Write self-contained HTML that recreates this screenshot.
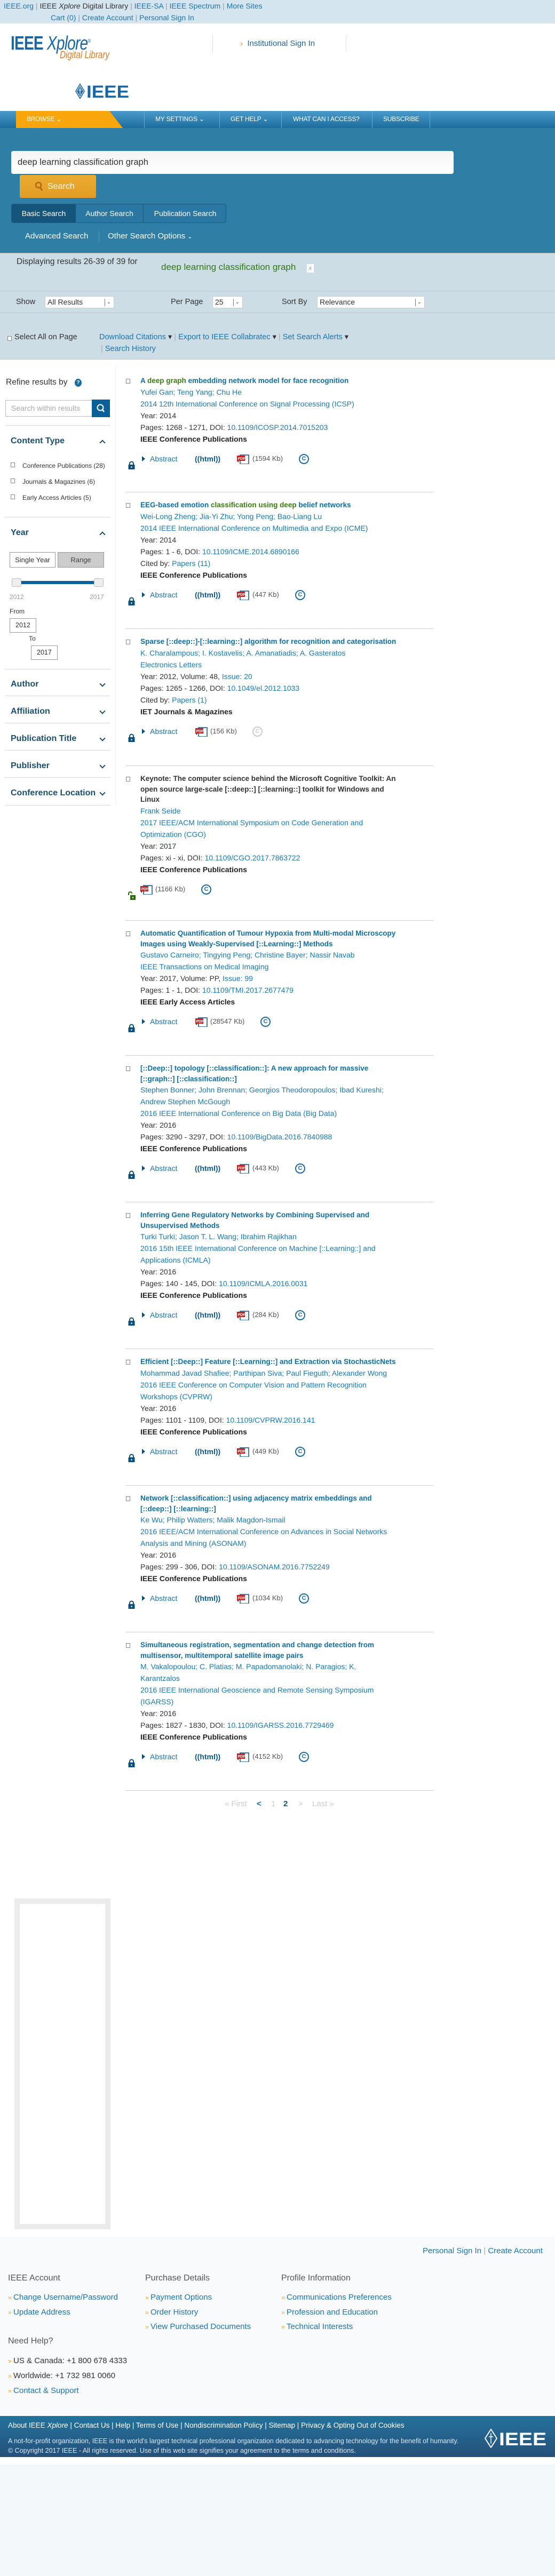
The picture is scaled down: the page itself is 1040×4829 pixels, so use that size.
<!DOCTYPE html>
<html><head><meta charset="utf-8">
<style>
*{margin:0;padding:0;box-sizing:border-box}
body{width:1040px;height:4829px;position:relative;overflow:hidden;background:#fff;font-family:"Liberation Sans",sans-serif;color:#333}
.a{position:absolute;white-space:nowrap}
a{text-decoration:none;color:#1a74ad}
.top{left:0;top:0;width:1040px;height:44px;background:#d5e5ef;font-size:14px}
.nav{left:0;top:208px;width:1040px;height:32px;background:linear-gradient(#4a9bcb,#1c6d9e);box-shadow:0 2px 3px rgba(0,0,0,.3)}
.nav span{position:absolute;top:8px;color:#fff;font-size:12px;letter-spacing:-.2px}
.nav i{position:absolute;top:0;width:1px;height:32px;background:#6aa8cf}
.srch{left:0;top:240px;width:1040px;height:234px;background:#2f7ea6}
.bar{left:0;width:1040px;background:#cddde6}
.sel{background:#fff;border:1px solid #c5ccd0;border-radius:2px;height:23px;font-size:14px;line-height:21px;padding-left:4px;color:#333}
.sel b{position:absolute;right:16px;top:4px;width:1px;height:14px;background:#777}
.sel em{position:absolute;right:5px;top:0;font-style:normal;font-size:10px;color:#555}
.cb{position:absolute;width:8px;height:9px;border:1px solid #888;background:#fff}
.sh{font-size:16px;font-weight:bold;color:#1b4f72}
.shl{position:absolute;left:10px;width:196px;height:1px;background:#d6d6d6}
.chev{position:absolute;left:188px;width:8px;height:8px;border-right:2px solid #1b4f72;border-bottom:2px solid #1b4f72}
.r{position:absolute;left:263px;white-space:nowrap}
.t{font-weight:bold;font-size:13.5px;line-height:19.5px;color:#0f6ea3}
.t g{color:#3b7d12}
.m{font-size:14px;line-height:22px;color:#333}
.m a{color:#1a7ab5}
.m b{color:#222}
.act{margin-top:16px;height:20px;position:relative;font-size:14px;line-height:20px}
.act .ab{position:absolute;left:0;color:#1a74ad}
.act .ab:before{content:"";display:inline-block;border-left:6px solid #0d4f7a;border-top:5px solid transparent;border-bottom:5px solid transparent;margin:0 9px 0 3px}
.act .h{position:absolute;color:#0d5a8e;font-weight:bold;font-size:14px}
.pdf{position:absolute;top:2px;width:24px;height:18px}
.kb{position:absolute;color:#555;font-size:13px}
.cp{position:absolute;top:1px;width:19px;height:19px;border:2.5px solid #1a6aa6;border-radius:50%;color:#1a6aa6;font-weight:bold;font-size:11px;line-height:14px;text-align:center}
.cp.g{border-color:#ccc;color:#ccc}
.lk{position:absolute;left:-23px;top:14px}
.sep{position:absolute;left:235px;width:577px;height:1px;background:#cfcfcf}
.rb{position:absolute;left:236px;width:8px;height:9px;border:1px solid #888}
.fl{font-size:15px;color:#1a74ad}
.fl:before{content:"» ";color:#f0a830;font-size:12px}
.fh{font-size:16px;color:#555}
</style></head><body>

<!-- top bar -->
<div class="a top">
 <div class="a" style="left:7px;top:3px"><a>IEEE.org</a> <span style="color:#999">|</span> <span style="color:#333">IEEE <i>Xplore</i> Digital Library</span> <span style="color:#999">|</span> <a>IEEE-SA</a> <span style="color:#999">|</span> <a>IEEE Spectrum</a> <span style="color:#999">|</span> <a>More Sites</a></div>
 <div class="a" style="left:95px;top:25px"><a>Cart (0)</a> <span style="color:#999">|</span> <a>Create Account</a> <span style="color:#999">|</span> <a>Personal Sign In</a></div>
</div>

<!-- logo -->
<div class="a" style="left:20px;top:60px;font-size:36px;color:#1a66a3;transform:scaleX(.78);transform-origin:left top;letter-spacing:-1px"><b style="font-weight:bold">IEEE</b> <i>Xplore</i><sup style="font-size:10px">®</sup></div>
<div class="a" style="left:112px;top:93px;font-size:19px;color:#e57a1e;font-style:italic;transform:scaleX(.8);transform-origin:left top">Digital Library</div>
<div class="a" style="left:398px;top:65px;width:1px;height:33px;background:#ddd"></div>
<div class="a" style="left:648px;top:65px;width:1px;height:33px;background:#ddd"></div>
<div class="a" style="left:450px;top:73px;font-size:15px;color:#1a66a3"><span style="color:#e88a1e">›</span>&nbsp; Institutional Sign In</div>
<svg class="a" style="left:140px;top:155px" width="104" height="32" viewBox="0 0 104 32">
 <path d="M10 1 L19 16 L10 31 L1 16Z" fill="#1a66a3"/><path d="M10 5 L16.5 16 L10 27 L3.5 16Z" fill="none" stroke="#fff" stroke-width="1"/><path d="M10 9v14M7 14h6" stroke="#fff" stroke-width="1.2"/>
 <text x="22" y="28" font-family="Liberation Sans" font-weight="bold" font-size="32" fill="#1a66a3" textLength="80" lengthAdjust="spacingAndGlyphs">IEEE</text>
</svg>

<!-- nav -->
<div class="a nav">
 <div class="a" style="left:30px;top:0;width:200px;height:32px;background:#f9a60d;clip-path:polygon(0 0,175px 0,200px 32px,0 32px)"></div>
 <span style="left:50px">BROWSE &#8964;</span>
 <i style="left:270px"></i><span style="left:291px">MY SETTINGS &#8964;</span>
 <i style="left:411px"></i><span style="left:432px">GET HELP &#8964;</span>
 <i style="left:527px"></i><span style="left:549px">WHAT CAN I ACCESS?</span>
 <i style="left:697px"></i><span style="left:718px">SUBSCRIBE</span>
 <i style="left:805px"></i>
</div>

<!-- search -->
<div class="a srch"></div>
<div class="a" style="left:21px;top:283px;width:829px;height:43px;background:linear-gradient(#f4f4f4,#fff);border-radius:4px;font-size:16.5px;line-height:43px;padding-left:12px;color:#333">deep learning classification graph</div>
<div class="a" style="left:37px;top:328px;width:143px;height:43px;background:linear-gradient(#eaad31,#e39b25);border-radius:3px;color:#fff;font-size:16px;line-height:43px;padding-left:30px">
 <svg class="a" style="left:28px;top:12px" width="16" height="20" viewBox="0 0 16 20"><circle cx="7" cy="7" r="5" fill="none" stroke="#b06a10" stroke-width="2.5"/><path d="M10 11l4 6" stroke="#b06a10" stroke-width="3"/></svg>
 <span style="margin-left:22px">Search</span></div>
<div class="a" style="left:21px;top:382px;width:403px;height:36px;border:1px solid #1d5a80;border-radius:4px;background:#2a77a3;overflow:hidden;font-size:14px;line-height:34px;color:#fff">
 <div class="a" style="left:0;top:0;width:120px;height:34px;background:#15557c;text-align:center">Basic Search</div>
 <div class="a" style="left:120px;top:0;width:127px;height:34px;text-align:center;border-right:1px solid #1d5a80">Author Search</div>
 <div class="a" style="left:247px;top:0;width:156px;height:34px;text-align:center">Publication Search</div>
</div>
<div class="a" style="left:47px;top:434px;font-size:15px;color:#fff">Advanced Search</div>
<div class="a" style="left:185px;top:433px;width:1px;height:22px;background:#5b9ac0"></div>
<div class="a" style="left:202px;top:434px;font-size:15px;color:#fff">Other Search Options <span style="font-size:11px">&#8964;</span></div>

<!-- results bar -->
<div class="a bar" style="top:474px;height:71px;border-top:1px solid #bbb"></div>
<div class="a" style="left:31px;top:482px;font-size:15.5px;color:#333">Displaying results 26-39 of 39 for</div>
<div class="a" style="left:302px;top:491px;font-size:17px;color:#2e7a10">deep learning classification graph</div>
<div class="a" style="left:575px;top:495px;width:13px;height:16px;background:#fff;color:#999;font-size:11px;text-align:center;line-height:16px">x</div>
<div class="a bar" style="top:545px;height:42px;border-top:1px solid #b9c6ce;border-bottom:1px solid #b9c6ce"></div>
<div class="a" style="left:30px;top:558px;font-size:14.5px">Show</div>
<div class="a sel" style="left:84px;top:555px;width:130px">All Results<b></b><em>&#8964;</em></div>
<div class="a" style="left:320px;top:558px;font-size:14.5px">Per Page</div>
<div class="a sel" style="left:398px;top:555px;width:57px">25<b></b><em>&#8964;</em></div>
<div class="a" style="left:528px;top:558px;font-size:14.5px">Sort By</div>
<div class="a sel" style="left:594px;top:555px;width:202px">Relevance<b></b><em>&#8964;</em></div>
<div class="a bar" style="top:587px;height:87px;border-bottom:1px solid #b9c6ce"></div>
<div class="cb" style="left:14px;top:630px"></div>
<div class="a" style="left:27px;top:624px;font-size:14.5px">Select All on Page</div>
<div class="a" style="left:186px;top:624px;font-size:14.5px"><a>Download Citations</a> ▾ <span style="color:#aaa">|</span> <a>Export to IEEE Collabratec</a> ▾ <span style="color:#aaa">|</span> <a>Set Search Alerts</a> ▾</div>
<div class="a" style="left:189px;top:646px;font-size:14.5px"><span style="color:#aaa">|</span> <a>Search History</a></div>

<!-- sidebar -->
<div class="a" style="left:216px;top:686px;width:1px;height:823px;background:#eee"></div>
<div class="a" style="left:11px;top:708px;font-size:15.5px;color:#333">Refine results by</div>
<div class="a" style="left:140px;top:710px;width:13px;height:15px;border-radius:50%;background:#1a6aa6;color:#fff;font-size:10px;text-align:center;line-height:15px;font-weight:bold">?</div>
<div class="a" style="left:10px;top:750px;width:163px;height:31px;border:1px solid #bbb;font-size:14px;line-height:29px;padding-left:10px;color:#aaa;overflow:hidden">Search within results</div>
<div class="a" style="left:172px;top:749px;width:34px;height:33px;background:#0a6199"><svg width="34" height="33" viewBox="0 0 34 33"><circle cx="16" cy="15" r="5.5" fill="none" stroke="#fff" stroke-width="2"/><path d="M20 19l3 4" stroke="#fff" stroke-width="2.5"/></svg></div>
<div class="shl" style="top:797px"></div>
<div class="a sh" style="left:20px;top:818px">Content Type</div>
<div class="chev" style="top:826px;transform:rotate(-135deg)"></div>
<div class="cb" style="left:20px;top:867px"></div><div class="a" style="left:42px;top:866px;font-size:12px">Conference Publications (28)</div>
<div class="cb" style="left:20px;top:897px"></div><div class="a" style="left:42px;top:896px;font-size:12px">Journals &amp; Magazines (6)</div>
<div class="cb" style="left:20px;top:927px"></div><div class="a" style="left:42px;top:926px;font-size:12px">Early Access Articles (5)</div>
<div class="shl" style="top:969px"></div>
<div class="a sh" style="left:20px;top:990px">Year</div>
<div class="chev" style="top:998px;transform:rotate(-135deg)"></div>
<div class="a" style="left:18px;top:1035px;width:86px;height:29px;border:1px solid #999;font-size:13px;line-height:27px;text-align:center">Single Year</div>
<div class="a" style="left:108px;top:1035px;width:87px;height:29px;border:1px solid #999;background:#ccc;font-size:13px;line-height:27px;text-align:center;color:#444">Range</div>
<div class="a" style="left:35px;top:1089px;width:145px;height:6px;background:#0a6199"></div>
<div class="a" style="left:22px;top:1084px;width:18px;height:16px;border:1px solid #bbb;background:#eee;border-radius:3px"></div>
<div class="a" style="left:176px;top:1084px;width:18px;height:16px;border:1px solid #bbb;background:#eee;border-radius:3px"></div>
<div class="a" style="left:18px;top:1112px;font-size:12px;color:#999">2012</div>
<div class="a" style="left:168px;top:1112px;font-size:12px;color:#999">2017</div>
<div class="a" style="left:18px;top:1139px;font-size:12px">From</div>
<div class="a" style="left:18px;top:1159px;width:50px;height:27px;border:1px solid #999;font-size:12.5px;line-height:25px;padding-left:10px;overflow:hidden">2012</div>
<div class="a" style="left:54px;top:1190px;font-size:12px">To</div>
<div class="a" style="left:58px;top:1210px;width:50px;height:27px;border:1px solid #999;font-size:12.5px;line-height:25px;padding-left:10px">2017</div>
<div class="shl" style="top:1254px"></div>
<div class="a sh" style="left:20px;top:1274px">Author</div><div class="chev" style="top:1278px;transform:rotate(45deg)"></div>
<div class="shl" style="top:1304px"></div>
<div class="a sh" style="left:20px;top:1325px">Affiliation</div><div class="chev" style="top:1329px;transform:rotate(45deg)"></div>
<div class="shl" style="top:1355px"></div>
<div class="a sh" style="left:20px;top:1376px">Publication Title</div><div class="chev" style="top:1380px;transform:rotate(45deg)"></div>
<div class="shl" style="top:1406px"></div>
<div class="a sh" style="left:20px;top:1427px">Publisher</div><div class="chev" style="top:1431px;transform:rotate(45deg)"></div>
<div class="shl" style="top:1457px"></div>
<div class="a sh" style="left:20px;top:1478px">Conference Location</div><div class="chev" style="top:1482px;transform:rotate(45deg)"></div>
<div class="shl" style="top:1509px"></div>

<svg width="0" height="0" style="position:absolute">
 <defs>
  <g id="pdf"><rect x="6" y="1" width="16" height="17" fill="#fff" stroke="#1a5a96" stroke-width="1.6"/><rect x="0" y="2" width="15" height="10" fill="#c8201c"/><text x="1.5" y="10" font-family="Liberation Sans" font-size="7" font-weight="bold" fill="#fff">PDF</text><path d="M0 12l3 3v-3z" fill="#8a1410"/></g>
  <g id="lk"><path d="M3 7V5a3.5 3.5 0 0 1 7 0v2" fill="none" stroke="#0b4f7c" stroke-width="2"/><rect x="0.5" y="7" width="12" height="9" fill="#0b4f7c"/><circle cx="6.5" cy="11.5" r="1.3" fill="#fff"/></g>
  <g id="ulk"><path d="M1 7V4a3 3 0 0 1 6 0" fill="none" stroke="#2e6b0e" stroke-width="2"/><rect x="4" y="7" width="10" height="9" fill="#2e6b0e"/><circle cx="9" cy="11.5" r="1.3" fill="#fff"/></g>
 </defs>
</svg>

<!-- R1 -->
<div class="rb" style="top:710px"></div>
<div class="r" style="top:704px">
 <div class="t">A <g>deep graph</g> embedding network model for face recognition</div>
 <div class="m"><a>Yufei Gan; Teng Yang; Chu He</a><br><a>2014 12th International Conference on Signal Processing (ICSP)</a><br>Year: 2014<br>Pages: 1268 - 1271, DOI: <a>10.1109/ICOSP.2014.7015203</a><br><b>IEEE Conference Publications</b></div>
 <div class="act"><span class="ab">Abstract</span><span class="h" style="left:102px">((html))</span><svg class="pdf" style="left:181px"><use href="#pdf"/></svg><span class="kb" style="left:210px">(1594 Kb)</span><span class="cp" style="left:297px">C</span><svg class="lk" width="13" height="17"><use href="#lk"/></svg></div>
</div>
<div class="sep" style="top:922px"></div>

<!-- R2 -->
<div class="rb" style="top:943px"></div>
<div class="r" style="top:937px">
 <div class="t">EEG-based emotion <g>classification using deep</g> belief networks</div>
 <div class="m"><a>Wei-Long Zheng; Jia-Yi Zhu; Yong Peng; Bao-Liang Lu</a><br><a>2014 IEEE International Conference on Multimedia and Expo (ICME)</a><br>Year: 2014<br>Pages: 1 - 6, DOI: <a>10.1109/ICME.2014.6890166</a><br>Cited by: <a>Papers (11)</a><br><b>IEEE Conference Publications</b></div>
 <div class="act"><span class="ab">Abstract</span><span class="h" style="left:102px">((html))</span><svg class="pdf" style="left:181px"><use href="#pdf"/></svg><span class="kb" style="left:210px">(447 Kb)</span><span class="cp" style="left:290px">C</span><svg class="lk" width="13" height="17"><use href="#lk"/></svg></div>
</div>
<div class="sep" style="top:1178px"></div>

<!-- R3 -->
<div class="rb" style="top:1199px"></div>
<div class="r" style="top:1193px">
 <div class="t">Sparse [::deep::]-[::learning::] algorithm for recognition and categorisation</div>
 <div class="m"><a>K. Charalampous; I. Kostavelis; A. Amanatiadis; A. Gasteratos</a><br><a>Electronics Letters</a><br>Year: 2012, Volume: 48, <a>Issue: 20</a><br>Pages: 1265 - 1266, DOI: <a>10.1049/el.2012.1033</a><br>Cited by: <a>Papers (1)</a><br><b>IET Journals &amp; Magazines</b></div>
 <div class="act"><span class="ab">Abstract</span><svg class="pdf" style="left:103px"><use href="#pdf"/></svg><span class="kb" style="left:131px">(156 Kb)</span><span class="cp g" style="left:210px">C</span><svg class="lk" width="13" height="17"><use href="#lk"/></svg></div>
</div>
<div class="sep" style="top:1435px"></div>

<!-- R4 -->
<div class="rb" style="top:1456px"></div>
<div class="r" style="top:1450px">
 <div class="t" style="color:#333">Keynote: The computer science behind the Microsoft Cognitive Toolkit: An<br>open source large-scale [::deep::] [::learning::] toolkit for Windows and<br>Linux</div>
 <div class="m"><a>Frank Seide</a><br><a>2017 IEEE/ACM International Symposium on Code Generation and</a><br><a>Optimization (CGO)</a><br>Year: 2017<br>Pages: xi - xi, DOI: <a>10.1109/CGO.2017.7863722</a><br><b>IEEE Conference Publications</b></div>
 <div class="act"><svg class="pdf" style="left:0"><use href="#pdf"/></svg><span class="kb" style="left:28px">(1166 Kb)</span><span class="cp" style="left:114px">C</span><svg class="lk" width="15" height="17"><use href="#ulk"/></svg></div>
</div>
<div class="sep" style="top:1725px"></div>

<!-- R5 -->
<div class="rb" style="top:1746px"></div>
<div class="r" style="top:1740px">
 <div class="t">Automatic Quantification of Tumour Hypoxia from Multi-modal Microscopy<br>Images using Weakly-Supervised [::Learning::] Methods</div>
 <div class="m"><a>Gustavo Carneiro; Tingying Peng; Christine Bayer; Nassir Navab</a><br><a>IEEE Transactions on Medical Imaging</a><br>Year: 2017, Volume: PP, <a>Issue: 99</a><br>Pages: 1 - 1, DOI: <a>10.1109/TMI.2017.2677479</a><br><b>IEEE Early Access Articles</b></div>
 <div class="act"><span class="ab">Abstract</span><svg class="pdf" style="left:103px"><use href="#pdf"/></svg><span class="kb" style="left:131px">(28547 Kb)</span><span class="cp" style="left:225px">C</span><svg class="lk" width="13" height="17"><use href="#lk"/></svg></div>
</div>
<div class="sep" style="top:1978px"></div>

<!-- R6 -->
<div class="rb" style="top:1999px"></div>
<div class="r" style="top:1993px">
 <div class="t">[::Deep::] topology [::classification::]: A new approach for massive<br>[::graph::] [::classification::]</div>
 <div class="m"><a>Stephen Bonner; John Brennan; Georgios Theodoropoulos; Ibad Kureshi;</a><br><a>Andrew Stephen McGough</a><br><a>2016 IEEE International Conference on Big Data (Big Data)</a><br>Year: 2016<br>Pages: 3290 - 3297, DOI: <a>10.1109/BigData.2016.7840988</a><br><b>IEEE Conference Publications</b></div>
 <div class="act"><span class="ab">Abstract</span><span class="h" style="left:102px">((html))</span><svg class="pdf" style="left:181px"><use href="#pdf"/></svg><span class="kb" style="left:210px">(443 Kb)</span><span class="cp" style="left:290px">C</span><svg class="lk" width="13" height="17"><use href="#lk"/></svg></div>
</div>
<div class="sep" style="top:2253px"></div>

<!-- R7 -->
<div class="rb" style="top:2274px"></div>
<div class="r" style="top:2268px">
 <div class="t">Inferring Gene Regulatory Networks by Combining Supervised and<br>Unsupervised Methods</div>
 <div class="m"><a>Turki Turki; Jason T. L. Wang; Ibrahim Rajikhan</a><br><a>2016 15th IEEE International Conference on Machine [::Learning::] and</a><br><a>Applications (ICMLA)</a><br>Year: 2016<br>Pages: 140 - 145, DOI: <a>10.1109/ICMLA.2016.0031</a><br><b>IEEE Conference Publications</b></div>
 <div class="act"><span class="ab">Abstract</span><span class="h" style="left:102px">((html))</span><svg class="pdf" style="left:181px"><use href="#pdf"/></svg><span class="kb" style="left:210px">(284 Kb)</span><span class="cp" style="left:290px">C</span><svg class="lk" width="13" height="17"><use href="#lk"/></svg></div>
</div>
<div class="sep" style="top:2528px"></div>

<!-- R8 -->
<div class="rb" style="top:2549px"></div>
<div class="r" style="top:2543px">
 <div class="t">Efficient [::Deep::] Feature [::Learning::] and Extraction via StochasticNets</div>
 <div class="m"><a>Mohammad Javad Shafiee; Parthipan Siva; Paul Fieguth; Alexander Wong</a><br><a>2016 IEEE Conference on Computer Vision and Pattern Recognition</a><br><a>Workshops (CVPRW)</a><br>Year: 2016<br>Pages: 1101 - 1109, DOI: <a>10.1109/CVPRW.2016.141</a><br><b>IEEE Conference Publications</b></div>
 <div class="act"><span class="ab">Abstract</span><span class="h" style="left:102px">((html))</span><svg class="pdf" style="left:181px"><use href="#pdf"/></svg><span class="kb" style="left:210px">(449 Kb)</span><span class="cp" style="left:290px">C</span><svg class="lk" width="13" height="17"><use href="#lk"/></svg></div>
</div>
<div class="sep" style="top:2784px"></div>

<!-- R9 -->
<div class="rb" style="top:2805px"></div>
<div class="r" style="top:2799px">
 <div class="t">Network [::classification::] using adjacency matrix embeddings and<br>[::deep::] [::learning::]</div>
 <div class="m"><a>Ke Wu; Philip Watters; Malik Magdon-Ismail</a><br><a>2016 IEEE/ACM International Conference on Advances in Social Networks</a><br><a>Analysis and Mining (ASONAM)</a><br>Year: 2016<br>Pages: 299 - 306, DOI: <a>10.1109/ASONAM.2016.7752249</a><br><b>IEEE Conference Publications</b></div>
 <div class="act"><span class="ab">Abstract</span><span class="h" style="left:102px">((html))</span><svg class="pdf" style="left:181px"><use href="#pdf"/></svg><span class="kb" style="left:210px">(1034 Kb)</span><span class="cp" style="left:297px">C</span><svg class="lk" width="13" height="17"><use href="#lk"/></svg></div>
</div>
<div class="sep" style="top:3059px"></div>

<!-- R10 -->
<div class="rb" style="top:3080px"></div>
<div class="r" style="top:3074px">
 <div class="t">Simultaneous registration, segmentation and change detection from<br>multisensor, multitemporal satellite image pairs</div>
 <div class="m"><a>M. Vakalopoulou; C. Platias; M. Papadomanolaki; N. Paragios; K.</a><br><a>Karantzalos</a><br><a>2016 IEEE International Geoscience and Remote Sensing Symposium</a><br><a>(IGARSS)</a><br>Year: 2016<br>Pages: 1827 - 1830, DOI: <a>10.1109/IGARSS.2016.7729469</a><br><b>IEEE Conference Publications</b></div>
 <div class="act"><span class="ab">Abstract</span><span class="h" style="left:102px">((html))</span><svg class="pdf" style="left:181px"><use href="#pdf"/></svg><span class="kb" style="left:210px">(4152 Kb)</span><span class="cp" style="left:297px">C</span><svg class="lk" width="13" height="17"><use href="#lk"/></svg></div>
</div>
<div class="sep" style="top:3356px"></div>

<!-- pagination -->
<div class="a" style="left:421px;top:3373px;font-size:15px;color:#ccc">« First</div>
<div class="a" style="left:481px;top:3373px;font-size:15px;color:#1a6aa6;font-weight:bold">&lt;</div>
<div class="a" style="left:508px;top:3373px;font-size:15px;color:#ccc">1</div>
<div class="a" style="left:531px;top:3373px;font-size:15px;color:#1b4f72;font-weight:bold">2</div>
<div class="a" style="left:559px;top:3373px;font-size:15px;color:#ccc">&gt;</div>
<div class="a" style="left:585px;top:3373px;font-size:15px;color:#ccc">Last »</div>

<!-- ad box -->
<div class="a" style="left:27px;top:3559px;width:180px;height:620px;border:10px solid #ebebeb;background:#fff"></div>

<!-- footer -->
<div class="a" style="left:0;top:4193px;width:1040px;height:336px;background:#f8fafc"></div>
<div class="a" style="left:792px;top:4211px;font-size:15px"><a>Personal Sign In</a> <span style="color:#aaa">|</span> <a>Create Account</a></div>
<div class="a fh" style="left:15px;top:4262px">IEEE Account</div>
<div class="a fh" style="left:272px;top:4262px">Purchase Details</div>
<div class="a fh" style="left:527px;top:4262px">Profile Information</div>
<div class="a fl" style="left:15px;top:4298px">Change Username/Password</div>
<div class="a fl" style="left:15px;top:4326px">Update Address</div>
<div class="a fl" style="left:272px;top:4298px">Payment Options</div>
<div class="a fl" style="left:272px;top:4326px">Order History</div>
<div class="a fl" style="left:272px;top:4353px">View Purchased Documents</div>
<div class="a fl" style="left:527px;top:4298px">Communications Preferences</div>
<div class="a fl" style="left:527px;top:4326px">Profession and Education</div>
<div class="a fl" style="left:527px;top:4353px">Technical Interests</div>
<div class="a fh" style="left:15px;top:4380px">Need Help?</div>
<div class="a fl" style="left:15px;top:4417px;color:#333">US &amp; Canada: +1 800 678 4333</div>
<div class="a fl" style="left:15px;top:4445px;color:#333">Worldwide: +1 732 981 0060</div>
<div class="a fl" style="left:15px;top:4473px">Contact &amp; Support</div>

<div class="a" style="left:0;top:4529px;width:1040px;height:77px;background:linear-gradient(#23739c,#25507a)"></div>
<div class="a" style="left:15px;top:4539px;font-size:13.5px;color:#fff">About IEEE <i>Xplore</i> | Contact Us | Help | Terms of Use | Nondiscrimination Policy | Sitemap | Privacy &amp; Opting Out of Cookies</div>
<div class="a" style="left:15px;top:4569px;font-size:12.5px;color:#dde6ee">A not-for-profit organization, IEEE is the world's largest technical professional organization dedicated to advancing technology for the benefit of humanity.</div>
<div class="a" style="left:15px;top:4587px;font-size:12.5px;color:#dde6ee">© Copyright 2017 IEEE - All rights reserved. Use of this web site signifies your agreement to the terms and conditions.</div>
<svg class="a" style="left:908px;top:4553px" width="118" height="36" viewBox="0 0 118 36">
 <path d="M12 1 L23 18 L12 35 L1 18Z" fill="none" stroke="#fff" stroke-width="2"/><path d="M12 8v20M8 15h8" stroke="#fff" stroke-width="1.5"/>
 <text x="27" y="31" font-family="Liberation Sans" font-weight="bold" font-size="34" fill="#fff" textLength="89" lengthAdjust="spacingAndGlyphs">IEEE</text>
</svg>
<div class="a" style="left:0;top:4620px;width:1040px;height:209px;background:#f3f9fb"></div>
</body></html>
